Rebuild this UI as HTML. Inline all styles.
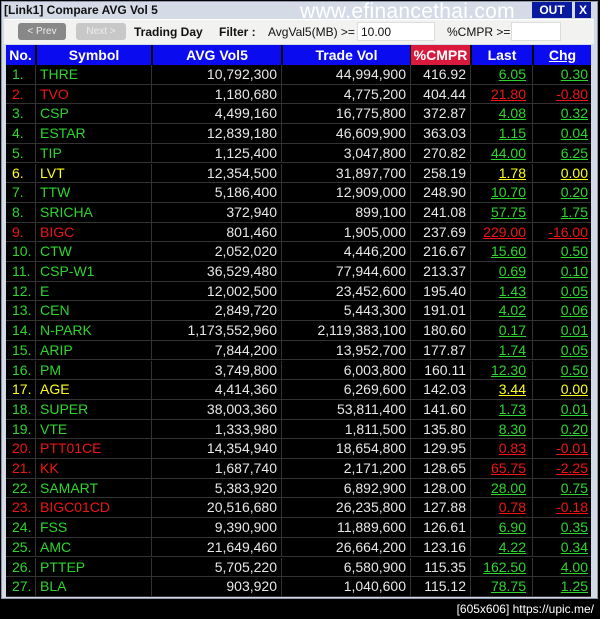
<!DOCTYPE html>
<html><head><meta charset="utf-8"><style>
*{margin:0;padding:0;box-sizing:border-box}
body{width:600px;height:619px;background:#000;position:relative;overflow:hidden;font-family:"Liberation Sans",sans-serif}
#frame{position:absolute;left:1px;top:1px;width:597px;height:598px;background:#d4dbe6;border:1px solid #8a97ad}
#title{position:absolute;left:4px;top:3px;font:bold 12px "Liberation Sans",sans-serif;color:#111}
#www{position:absolute;left:300px;top:0px;font-size:21px;color:#fff;letter-spacing:0.3px}
.btnb{position:absolute;top:2px;height:16px;background:#0a1a9e;color:#fff;font:bold 12px "Liberation Sans";text-align:center;line-height:16px}
#tool{position:absolute;left:4px;top:19px;width:590px;height:25px;background:#f2f2f0;border-top:1px solid #fff;font:12px "Liberation Sans",sans-serif;color:#111}
.tb{position:absolute;top:3px;height:17px;border-radius:3px;font-size:10px;color:#eee;text-align:center;line-height:17px}
.in{position:absolute;top:2px;height:19px;background:#fff;border:1px solid #ddd}
#grid{position:absolute;left:6px;top:45px;width:585px;height:552px;background:#000}
.hd{position:absolute;top:0;height:20px;background:#0b0bf0;color:#fff;font:bold 14px "Liberation Sans";line-height:20px;text-align:center}
.r{position:absolute;left:0;width:585px;height:19.7px;border-bottom:1px solid #333;font-size:14px;line-height:19px}
.r span{position:absolute;top:0;height:19.7px;border-right:1px solid #333}
.g{color:#2ed52e}.d{color:#ee1515}.y{color:#ffff1a}.w{color:#e8e8e8}
.u{text-decoration:underline}
</style></head><body>
<div id="frame"></div>
<div id="title">[Link1] Compare AVG Vol 5</div>
<div id="www">www.efinancethai.com</div>
<div class="btnb" style="left:532px;width:40px">OUT</div>
<div class="btnb" style="left:575px;width:16px">X</div>
<div id="tool">
<div class="tb" style="left:14px;width:48px;background:#888">&lt; Prev</div>
<div class="tb" style="left:72px;width:50px;background:#c8c8c8">Next &gt;</div>
<div style="position:absolute;left:130px;top:5px;font-weight:bold">Trading Day</div>
<div style="position:absolute;left:215px;top:5px;font-weight:bold">Filter :</div>
<div style="position:absolute;left:264px;top:5px">AvgVal5(MB) &gt;=</div>
<div class="in" style="left:353px;width:78px"><span style="position:absolute;left:3px;top:2px">10.00</span></div>
<div style="position:absolute;left:443px;top:5px">%CMPR &gt;=</div>
<div class="in" style="left:507px;width:50px"></div>
</div>
<div id="grid">
<div class="hd" style="left:0;width:29px">No.</div>
<div class="hd" style="left:31px;width:114px">Symbol</div>
<div class="hd" style="left:147px;width:128px">AVG Vol5</div>
<div class="hd" style="left:277px;width:127px">Trade Vol</div>
<div class="hd" style="left:405px;width:59px;background:#d91a3c">%CMPR</div>
<div class="hd" style="left:466px;width:60px">Last</div>
<div class="hd" style="left:528px;width:57px;text-decoration:underline">Chg</div>
<div id="rows"></div>
</div>
<div style="position:absolute;right:6px;top:602px;color:#fff;font:12px 'Liberation Sans',sans-serif;white-space:nowrap">[605x606] https://upic.me/</div>
<script>
var D=[["THRE","10,792,300","44,994,900","416.92","6.05","0.30","g","g"],
["TVO","1,180,680","4,775,200","404.44","21.80","-0.80","d","d"],
["CSP","4,499,160","16,775,800","372.87","4.08","0.32","g","g"],
["ESTAR","12,839,180","46,609,900","363.03","1.15","0.04","g","g"],
["TIP","1,125,400","3,047,800","270.82","44.00","6.25","g","g"],
["LVT","12,354,500","31,897,700","258.19","1.78","0.00","y","y"],
["TTW","5,186,400","12,909,000","248.90","10.70","0.20","g","g"],
["SRICHA","372,940","899,100","241.08","57.75","1.75","g","g"],
["BIGC","801,460","1,905,000","237.69","229.00","-16.00","d","d"],
["CTW","2,052,020","4,446,200","216.67","15.60","0.50","g","g"],
["CSP-W1","36,529,480","77,944,600","213.37","0.69","0.10","g","g"],
["E","12,002,500","23,452,600","195.40","1.43","0.05","g","g"],
["CEN","2,849,720","5,443,300","191.01","4.02","0.06","g","g"],
["N-PARK","1,173,552,960","2,119,383,100","180.60","0.17","0.01","g","g"],
["ARIP","7,844,200","13,952,700","177.87","1.74","0.05","g","g"],
["PM","3,749,800","6,003,800","160.11","12.30","0.50","g","g"],
["AGE","4,414,360","6,269,600","142.03","3.44","0.00","y","y"],
["SUPER","38,003,360","53,811,400","141.60","1.73","0.01","g","g"],
["VTE","1,333,980","1,811,500","135.80","8.30","0.20","g","g"],
["PTT01CE","14,354,940","18,654,800","129.95","0.83","-0.01","d","d"],
["KK","1,687,740","2,171,200","128.65","65.75","-2.25","d","d"],
["SAMART","5,383,920","6,892,900","128.00","28.00","0.75","g","g"],
["BIGC01CD","20,516,680","26,235,800","127.88","0.78","-0.18","d","d"],
["FSS","9,390,900","11,889,600","126.61","6.90","0.35","g","g"],
["AMC","21,649,460","26,664,200","123.16","4.22","0.34","g","g"],
["PTTEP","5,705,220","6,580,900","115.35","162.50","4.00","g","g"],
["BLA","903,920","1,040,600","115.12","78.75","1.25","g","g"]];
var h="";
D.forEach(function(r,i){var t=20+i*19.7;
h+='<div class="r" style="top:'+t+'px">'+
'<span class="'+r[6]+'" style="left:0;width:30px;padding-left:6px">'+(i+1)+'.</span>'+
'<span class="'+r[6]+'" style="left:30px;width:116px;padding-left:4px">'+r[0]+'</span>'+
'<span class="w" style="left:146px;width:130px;text-align:right;padding-right:4px">'+r[1]+'</span>'+
'<span class="w" style="left:276px;width:129px;text-align:right;padding-right:4px">'+r[2]+'</span>'+
'<span class="w" style="left:405px;width:60px;text-align:right;padding-right:4px">'+r[3]+'</span>'+
'<span class="'+r[7]+' u" style="left:465px;width:62px;text-align:right;padding-right:6px">'+r[4]+'</span>'+
'<span class="'+r[7]+' u" style="left:527px;width:58px;text-align:right;padding-right:3px;border-right:0">'+r[5]+'</span></div>';});
document.getElementById("rows").innerHTML=h;
</script>
</body></html>
